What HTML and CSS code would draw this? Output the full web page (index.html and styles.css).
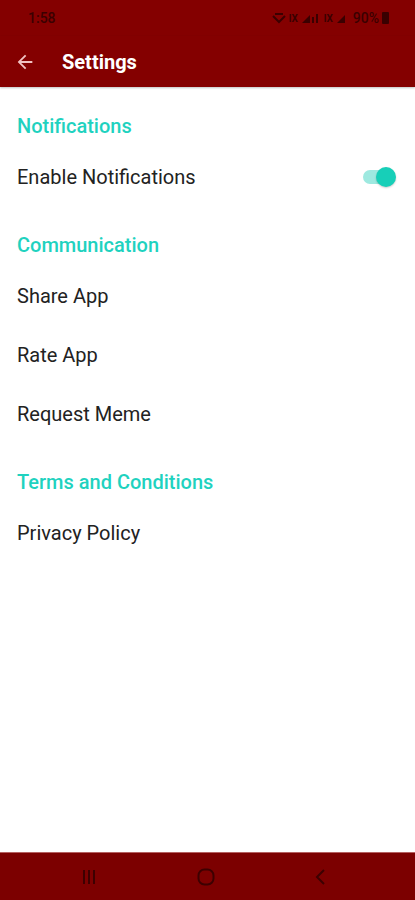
FILE: index.html
```html
<!DOCTYPE html>
<html lang="en">
<head>
    <meta charset="UTF-8">
    <meta name="viewport" content="width=device-width, initial-scale=1.0">
    <title>Settings</title>
    <link rel="stylesheet" href="styles.css">
</head>
<body>

<div class="phone">
    <!-- Status bar -->
    <div class="status-bar">
        <span class="time">1:58</span>
        <span class="status-icons">
            <svg width="14" height="11" viewBox="0 0 14 11"><path d="M1 3 L7 9 L13 3 M3 1 L11 1" stroke="#3a0000" stroke-width="2" fill="none"/></svg>
            <span class="sig">lX</span>
            <svg width="20" height="11" viewBox="0 0 20 11"><path d="M1 10 L9 2 L9 10 Z M11 10 h2 v-6 h-2z M15 10 h2 v-9 h-2z" fill="#3a0000"/></svg>
            <span class="sig">lX</span>
            <svg width="10" height="11" viewBox="0 0 10 11"><path d="M1 10 L9 2 L9 10 Z" fill="#3a0000"/></svg>
            <span class="battery-text">90%</span>
            <span class="battery"></span>
        </span>
    </div>

    <!-- App bar -->
    <header class="app-bar">
        <svg class="back" width="22" height="22" viewBox="0 0 24 24">
            <path d="M20 11H7.83l5.59-5.59L12 4l-8 8 8 8 1.41-1.41L7.83 13H20v-2z" fill="#f1c3c3"/>
        </svg>
        <h1>Settings</h1>
    </header>

    <!-- Preferences -->
    <main class="prefs">
        <section class="category">
            <h2>Notifications</h2>
            <div class="pref-row">
                <span>Enable Notifications</span>
                <span class="switch on"><span class="thumb"></span></span>
            </div>
        </section>

        <section class="category">
            <h2>Communication</h2>
            <div class="pref-row"><span>Share App</span></div>
            <div class="pref-row"><span>Rate App</span></div>
            <div class="pref-row"><span>Request Meme</span></div>
        </section>

        <section class="category">
            <h2>Terms and Conditions</h2>
            <div class="pref-row"><span>Privacy Policy</span></div>
        </section>
    </main>

    <!-- Nav bar -->
    <nav class="nav-bar">
        <svg width="20" height="18" viewBox="0 0 20 18"><path d="M4 2v14M9 2v14M14 2v14" stroke="#3d0000" stroke-width="2"/></svg>
        <svg width="20" height="20" viewBox="0 0 20 20"><rect x="2.5" y="2.5" width="15" height="15" rx="6" stroke="#3d0000" stroke-width="2" fill="none"/></svg>
        <svg width="20" height="20" viewBox="0 0 20 20"><path d="M13 3 L6 10 L13 17" stroke="#3d0000" stroke-width="2" fill="none"/></svg>
    </nav>
</div>

</body>
</html>
```

FILE: styles.css
```css
:root {
    --bar-red: #840000;
    --teal: #1fd2bf;
    --text: #222222;
}

body {
    margin: 0;
    font-family: Roboto, "Noto Sans", Arial, sans-serif;
    background: #ffffff;
}

.phone {
    width: 415px;
    height: 900px;
    display: flex;
    flex-direction: column;
}

.status-bar {
    height: 36px;
    background: var(--bar-red);
    display: flex;
    align-items: center;
    justify-content: space-between;
    padding: 0 26px 0 28px;
    color: #3a0000;
    font-size: 14px;
    font-weight: 500;
}

.status-icons {
    display: flex;
    align-items: center;
    gap: 3px;
}

.sig {
    font-size: 10px;
    font-weight: 700;
}

.battery-text {
    margin-left: 4px;
}

.battery {
    width: 7px;
    height: 12px;
    background: #3a0000;
    border-radius: 1px;
}

.app-bar {
    height: 51px;
    background: var(--bar-red);
    display: flex;
    align-items: center;
    padding: 0 14px;
    box-shadow: 0 1px 2px rgba(0, 0, 0, 0.25);
}

.app-bar .back {
    margin-right: 26px;
}

.app-bar h1 {
    margin: 0;
    color: #ffffff;
    font-size: 20px;
    font-weight: 700;
}

.prefs {
    flex: 1;
    padding-top: 18px;
}

.category h2 {
    margin: 0;
    padding: 0 17px;
    height: 42px;
    line-height: 42px;
    color: var(--teal);
    font-size: 20px;
    font-weight: 500;
}

.pref-row {
    height: 59px;
    padding: 0 19px 0 17px;
    display: flex;
    align-items: center;
    justify-content: space-between;
    color: var(--text);
    font-size: 20px;
}

.category + .category {
    margin-top: 18px;
}

.switch {
    position: relative;
    width: 30px;
    height: 14px;
    margin-right: 3px;
    border-radius: 7px;
    background: #9ee9e0;
}

.switch .thumb {
    position: absolute;
    right: -3px;
    top: -3px;
    width: 20px;
    height: 20px;
    border-radius: 50%;
    background: #17cfb8;
    box-shadow: 0 1px 2px rgba(0, 0, 0, 0.2);
}

.nav-bar {
    height: 47px;
    background: #7c0000;
    border-top: 1px solid #b46060;
    display: flex;
    align-items: center;
    justify-content: space-between;
    padding: 0 84px 0 80px;
}
```
